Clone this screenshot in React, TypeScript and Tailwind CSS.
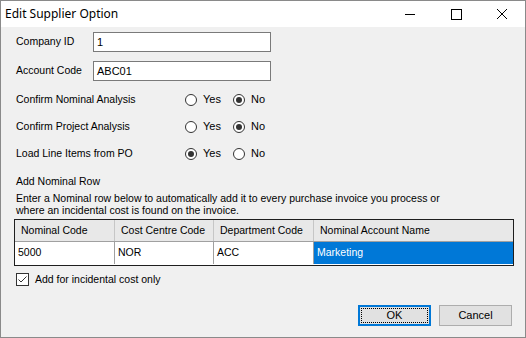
import React, { useState } from "react";

const font = "font-['Liberation_Sans',Arial,sans-serif] text-[10.5px] text-black";

function TextField({ value }: { value: string }) {
    return (
        <div className="w-[178px] h-[20px] bg-white border border-[#7a7a7a] flex items-center px-[3px] leading-none text-[11px]">
            {value}
        </div>
    );
}

function Radio({ label, checked, onClick }: { label: string; checked: boolean; onClick: () => void }) {
    return (
        <button onClick={onClick} className="flex items-center gap-[6px] w-[48px] h-full">
            <span className="w-[12px] h-[12px] rounded-full border border-[#333] bg-white flex items-center justify-center shrink-0">
                {checked && <span className="w-[6px] h-[6px] rounded-full bg-[#333]" />}
            </span>
            <span className="text-[11px]">{label}</span>
        </button>
    );
}

function RadioRow({ label, initial }: { label: string; initial: boolean }) {
    const [yes, setYes] = useState(initial);
    return (
        <div className="h-[27px] flex items-center">
            <span className="w-[169px]">{label}</span>
            <Radio label="Yes" checked={yes} onClick={() => setYes(true)} />
            <Radio label="No" checked={!yes} onClick={() => setYes(false)} />
        </div>
    );
}

function TitleBar() {
    return (
        <div className="h-[26px] bg-white flex items-center shrink-0">
            <span className="pl-[4px] flex-1 font-['Noto_Sans',sans-serif] text-[12px] text-black">Edit Supplier Option</span>
            <div className="flex items-center h-full">
                <svg width="46" height="26" viewBox="0 0 46 26">
                    <line x1="18" y1="13.5" x2="28" y2="13.5" stroke="#000" strokeWidth="1" />
                </svg>
                <svg width="46" height="26" viewBox="0 0 46 26">
                    <rect x="18.5" y="8.5" width="10" height="10" fill="none" stroke="#000" strokeWidth="1" />
                </svg>
                <svg width="46" height="26" viewBox="0 0 46 26">
                    <path d="M18 8 L28 18 M28 8 L18 18" stroke="#000" strokeWidth="1" />
                </svg>
            </div>
        </div>
    );
}

function NominalGrid() {
    const cols = [
        { head: "Nominal Code", value: "5000", w: "w-[99px]" },
        { head: "Cost Centre Code", value: "NOR", w: "w-[99px]" },
        { head: "Department Code", value: "ACC", w: "w-[100px]" },
        { head: "Nominal Account Name", value: "Marketing", w: "flex-1" },
    ];
    return (
        <div className="mt-[3px] ml-[13px] w-[500px] h-[47px] border border-[#1e1e1e] bg-white flex flex-col">
            <div className="h-[22px] flex bg-[#e8e8e8] border-b border-[#a0a0a0]">
                {cols.map((c, i) => (
                    <div key={c.head} className={`${c.w} flex items-center pl-[6px] ${i > 0 ? "border-l border-[#c6c6c6]" : ""}`}>
                        {c.head}
                    </div>
                ))}
            </div>
            <div className="h-[22px] flex">
                {cols.map((c, i) => (
                    <div
                        key={c.head}
                        className={`${c.w} flex items-center pl-[3px] ${i > 0 ? "border-l border-[#a0a0a0]" : ""} ${i === 3 ? "bg-[#0078d7] text-white" : ""}`}
                    >
                        {c.value}
                    </div>
                ))}
            </div>
        </div>
    );
}

export default function App() {
    const [incidental, setIncidental] = useState(true);

    return (
        <div className={`w-[526px] h-[338px] flex flex-col bg-[#f0f0f0] border border-[#8a8a8a] overflow-hidden ${font}`}>
            <TitleBar />
            <div className="flex flex-col pl-[15px] pt-[5px]">
                <div className="flex items-center">
                    <span className="w-[77px]">Company ID</span>
                    <TextField value="1" />
                </div>
                <div className="flex items-center mt-[9px]">
                    <span className="w-[77px]">Account Code</span>
                    <TextField value="ABC01" />
                </div>
                <div className="mt-[5px]">
                    <RadioRow label="Confirm Nominal Analysis" initial={false} />
                    <RadioRow label="Confirm Project Analysis" initial={false} />
                    <RadioRow label="Load Line Items from PO" initial={true} />
                </div>
                <div className="mt-[8px] leading-[12px]">Add Nominal Row</div>
                <div className="mt-[5px] leading-[12px]">
                    Enter a Nominal row below to automatically add it to every purchase invoice you process or
                    <br />
                    where an incidental cost is found on the invoice.
                </div>
            </div>
            <NominalGrid />
            <button onClick={() => setIncidental(!incidental)} className="ml-[15px] mt-[6px] flex items-center gap-[6px] self-start">
                <span className="w-[13px] h-[13px] border border-[#333] bg-white flex items-center justify-center">
                    {incidental && (
                        <svg width="11" height="11" viewBox="0 0 11 11">
                            <path d="M1.5 5.5 L4 8 L9.5 2.5" fill="none" stroke="#333" strokeWidth="1" />
                        </svg>
                    )}
                </span>
                <span>Add for incidental cost only</span>
            </button>
            <div className="flex justify-end gap-[8px] pr-[13px] mt-[17px]">
                <button className="w-[73px] h-[21px] bg-[#e1e1e1] border-2 border-[#0078d7] p-[1px]">
                    <span className="w-full h-full flex items-center justify-center border border-dotted border-black text-[11px]">OK</span>
                </button>
                <button className="w-[73px] h-[21px] bg-[#e1e1e1] border border-[#adadad] flex items-center justify-center text-[11px]">Cancel</button>
            </div>
        </div>
    );
}
